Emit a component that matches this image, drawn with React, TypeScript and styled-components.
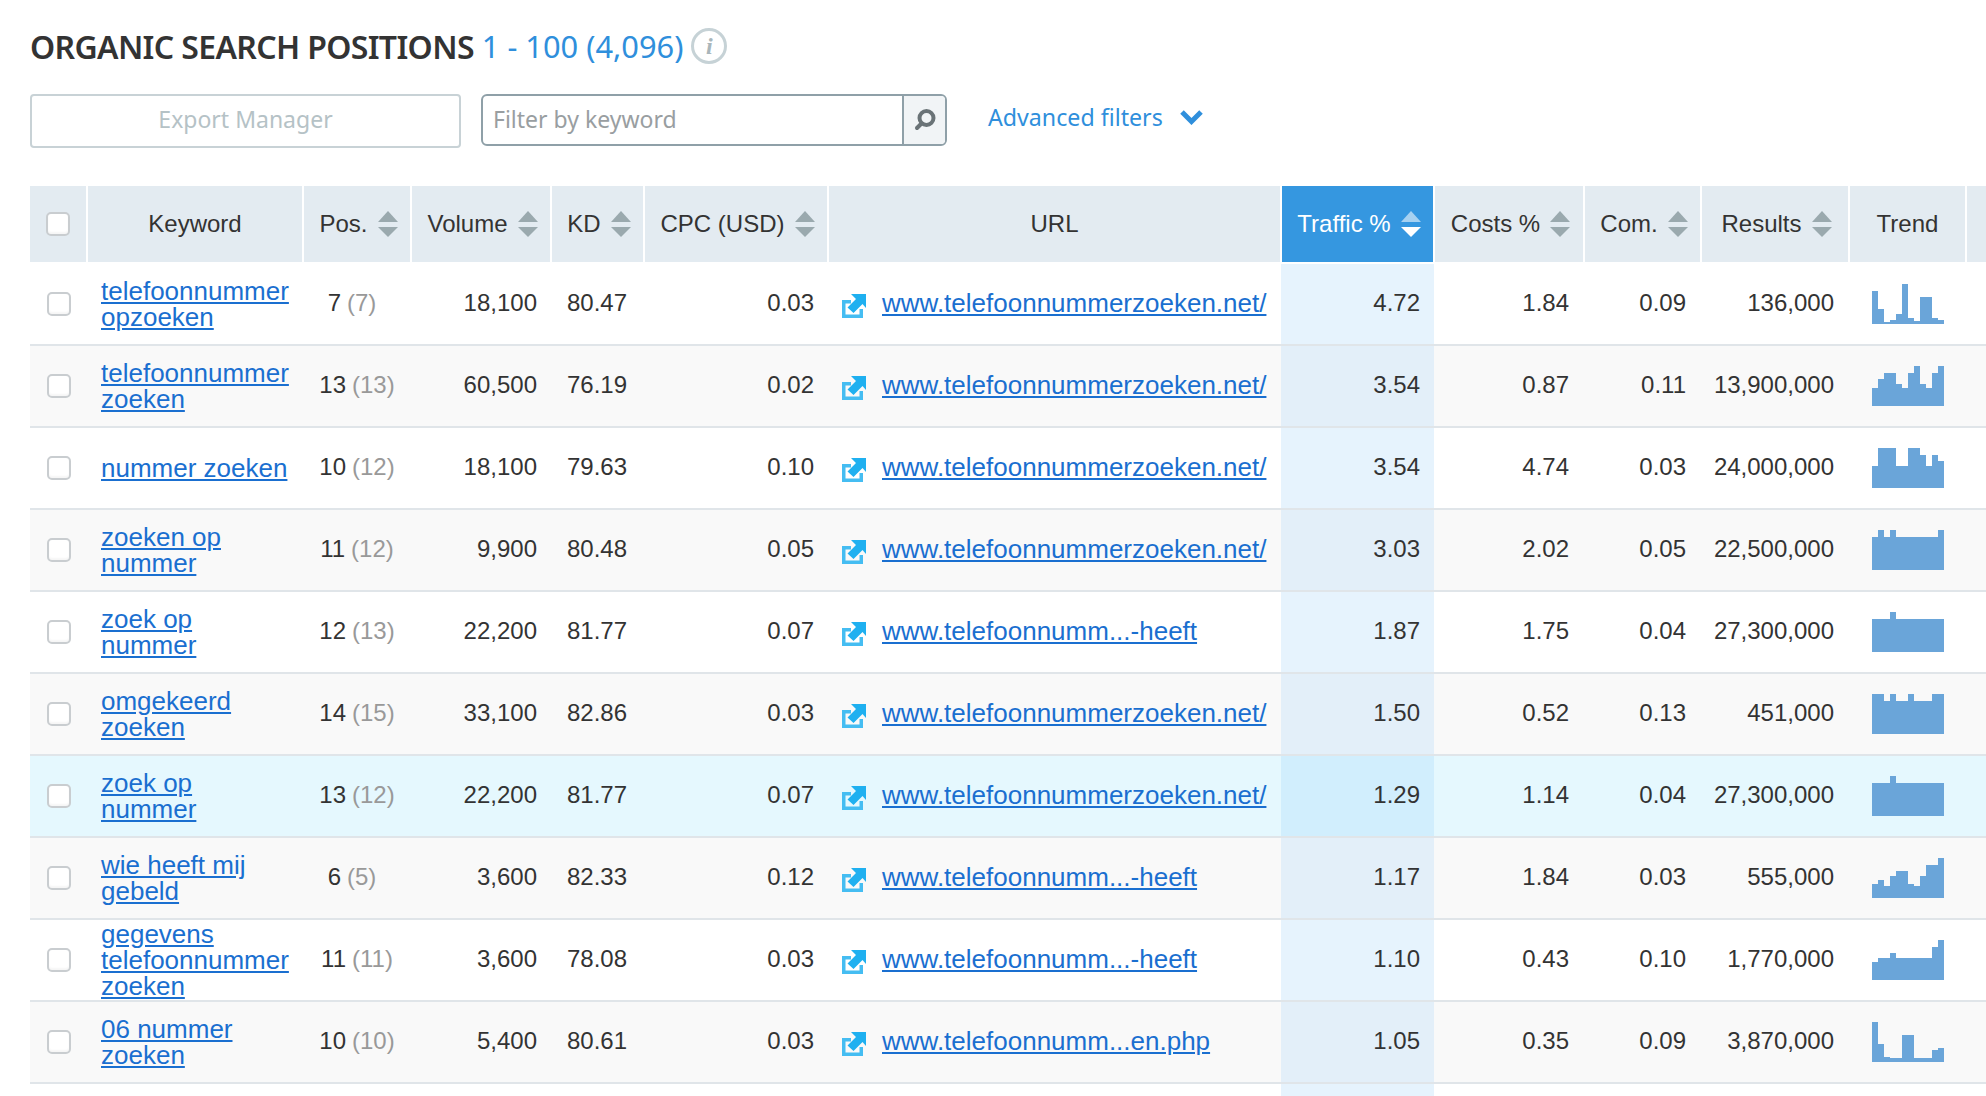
import React from 'react';
import styled, { createGlobalStyle } from 'styled-components';

const GlobalStyle = createGlobalStyle`
  html, body {
    margin: 0;
    height: 100%;
    overflow: hidden;
    background: #fff;
  }
  #root {
    height: 100%;
  }
`;

const COLUMNS = '56px 214px 106px 138px 91px 182px 451px 151px 148px 115px 146px 115px 1fr';

const Page = styled.div`
  height: 1096px;
  padding: 28px 0 0 30px;
  box-sizing: border-box;
  overflow: hidden;
  font-family: 'Liberation Sans', Arial, sans-serif;
  color: #333;
`;

const TitleRow = styled.div`
  display: flex;
  align-items: center;
  height: 36px;
`;

const Title = styled.h1`
  margin: 0;
  font-family: 'Noto Sans', sans-serif;
  font-size: 32px;
  font-weight: 600;
  color: #333;
  letter-spacing: -0.65px;
  white-space: nowrap;
`;

const Range = styled.span`
  margin-left: 8px;
  font-family: 'Noto Sans', sans-serif;
  font-size: 30.8px;
  color: #2f8fdc;
  white-space: nowrap;
`;

const InfoBadge = styled.span`
  width: 36px;
  height: 36px;
  margin-left: 8px;
  box-sizing: border-box;
  display: flex;
  align-items: center;
  justify-content: center;
  border: 3px solid #c6d2d6;
  border-radius: 50%;
  font-family: 'Liberation Serif', serif;
  font-style: italic;
  font-weight: 700;
  font-size: 24px;
  color: #a9b6bb;
`;

const Toolbar = styled.div`
  display: flex;
  align-items: flex-start;
  margin-top: 30px;
`;

const ExportButton = styled.button`
  width: 431px;
  height: 54px;
  padding: 0 0 4px;
  background: #fff;
  border: 2px solid #c8d2d6;
  border-radius: 4px;
  font-family: 'Noto Sans', sans-serif;
  font-size: 23px;
  color: #b5c2c6;
`;

const FilterBox = styled.div`
  width: 466px;
  height: 52px;
  margin-left: 20px;
  box-sizing: border-box;
  display: flex;
  border: 2px solid #8fa0a8;
  border-radius: 6px;
  overflow: hidden;
`;

const FilterText = styled.div`
  flex: 1;
  padding: 0 0 2px 10px;
  display: flex;
  align-items: center;
  font-family: 'Noto Sans', sans-serif;
  font-size: 23px;
  color: #999ea1;
`;

const SearchButton = styled.div`
  width: 41px;
  display: flex;
  align-items: center;
  justify-content: center;
  background: #f1f4f6;
  border-left: 2px solid #8fa0a8;
`;

const AdvancedFilters = styled.div`
  height: 46px;
  margin-left: 41px;
  display: flex;
  align-items: center;
  gap: 17px;
  font-family: 'Noto Sans', sans-serif;
  font-size: 23.2px;
  color: #2f8fdc;
`;

const Table = styled.div`
  margin-top: 38px;
`;

const HeaderRow = styled.div`
  display: grid;
  grid-template-columns: ${COLUMNS};
  column-gap: 2px;
  height: 76px;
`;

const HeaderCell = styled.div<{ $active?: boolean; $sortable?: boolean }>`
  display: flex;
  align-items: center;
  justify-content: center;
  gap: 10px;
  padding-left: ${(p) => (p.$sortable ? 3 : 0)}px;
  background: ${(p) => (p.$active ? '#3597e0' : '#e3ebf1')};
  color: ${(p) => (p.$active ? '#fff' : '#333')};
  font-size: 24px;
  white-space: nowrap;
  overflow: hidden;
`;

const Rows = styled.div`
  margin-top: 2px;
`;

type Tone = 'white' | 'grey' | 'hover';

const rowBg: Record<Tone, string> = { white: '#fff', grey: '#f9f9f9', hover: '#e5f8fe' };
const trafficBg: Record<Tone, string> = { white: '#e6f3fd', grey: '#e3eff9', hover: '#d1eefd' };

const Row = styled.div<{ $tone: Tone }>`
  display: grid;
  grid-template-columns: ${COLUMNS};
  column-gap: 2px;
  height: 82px;
  box-sizing: border-box;
  border-bottom: 2px solid #e0e5e9;
  background: ${(p) => rowBg[p.$tone]};
  font-size: 24px;
`;

const Cell = styled.div<{ $align?: 'left' | 'center' | 'right' }>`
  display: flex;
  align-items: center;
  justify-content: ${(p) =>
    p.$align === 'right' ? 'flex-end' : p.$align === 'center' ? 'center' : 'flex-start'};
  padding: 0 ${(p) => (p.$align === 'right' ? 14 : 0)}px 2px 0;
  white-space: nowrap;
`;

const CheckCell = styled(Cell)`
  padding: 0 0 0 2px;
`;

const KeywordCell = styled(Cell)`
  padding: 0 11px 0 13px;
  white-space: normal;
`;

const PosCell = styled(Cell)<{ $single: boolean }>`
  padding-right: ${(p) => (p.$single ? 10 : 0)}px;
`;

const VolumeCell = styled(Cell)`
  padding-right: 13px;
`;

const KdCell = styled(Cell)`
  padding-left: 15px;
`;

const UrlCell = styled(Cell)`
  padding-left: 13px;
  gap: 16px;
`;

const TrafficCell = styled(Cell)<{ $tone: Tone }>`
  margin: 0 -1px;
  padding-right: 14px;
  background: ${(p) => trafficBg[p.$tone]};
`;

const TrendCell = styled(Cell)`
  padding: 0;
`;

const Link = styled.a`
  font-size: 26px;
  line-height: 26px;
  color: #1a6fd0;
  text-decoration: underline;
`;

const Prev = styled.span`
  margin-left: 6px;
  color: #999;
`;

const CheckBox = styled.span`
  display: block;
  width: 24px;
  height: 24px;
  box-sizing: border-box;
  border: 2px solid #c9cdd0;
  border-radius: 5px;
  background: #fff;
  box-shadow: inset 0 -2px 2px rgba(0, 0, 0, 0.04);
`;

const ArrowStack = styled.svg`
  flex: none;
`;

const LinkIcon = styled.svg`
  flex: none;
  margin-top: 6px;
`;

function SortArrows({ active }: { active?: boolean }) {
  return (
    <ArrowStack width="20" height="26" viewBox="0 0 20 26">
      <polygon points="10,0 20,11 0,11" fill={active ? '#a6d1f1' : '#9aa9ae'} />
      <polygon points="0,16 20,16 10,26" fill={active ? '#fff' : '#9aa9ae'} />
    </ArrowStack>
  );
}

function Magnifier() {
  return (
    <svg width="24" height="24" viewBox="0 0 24 24" fill="none">
      <circle cx="13.5" cy="10" r="7" stroke="#6a7377" strokeWidth="4" />
      <path d="M8.5 15.5 L4 20" stroke="#6a7377" strokeWidth="4" strokeLinecap="round" />
    </svg>
  );
}

function Chevron() {
  return (
    <svg width="23" height="15" viewBox="0 0 23 15" fill="none">
      <path d="M2 2 L11.5 11.5 L21 2" stroke="#2f8fdc" strokeWidth="5" />
    </svg>
  );
}

function ExternalIcon() {
  return (
    <LinkIcon width="24" height="24" viewBox="0 0 24 24">
      <path d="M0 6 H9 V9.5 H3.5 V20.5 H17.5 V15 H21 V24 H0 Z" fill="#45bdf2" />
      <path d="M9 0 H24 V14 L20.5 10 L11.5 19 L5.5 13.5 L14 5 Z" fill="#1fb0f0" />
    </LinkIcon>
  );
}

function Trend({ bars }: { bars: number[] }) {
  return (
    <svg width="72" height="40" viewBox="0 0 72 40">
      {bars.map((h, i) => (
        <rect key={i} x={i * 6} y={40 - h} width="6" height={h} fill="#6aa5d9" />
      ))}
    </svg>
  );
}

const URL_FULL = 'www.telefoonnummerzoeken.net/';
const URL_HEEFT = 'www.telefoonnumm...-heeft';
const URL_PHP = 'www.telefoonnumm...en.php';

const FLAT = [33, 33, 33, 40, 33, 33, 33, 33, 33, 33, 33, 33];

const data = [
  { kw: 'telefoonnummer opzoeken', pos: 7, prev: 7, vol: '18,100', kd: '80.47', cpc: '0.03', url: URL_FULL, tr: '4.72', cost: '1.84', com: '0.09', res: '136,000', tone: 'white', bars: [33, 15, 2, 4, 10, 40, 6, 3, 27, 27, 6, 4] },
  { kw: 'telefoonnummer zoeken', pos: 13, prev: 13, vol: '60,500', kd: '76.19', cpc: '0.02', url: URL_FULL, tr: '3.54', cost: '0.87', com: '0.11', res: '13,900,000', tone: 'grey', bars: [18, 27, 33, 33, 22, 18, 33, 40, 22, 18, 33, 40] },
  { kw: 'nummer zoeken', pos: 10, prev: 12, vol: '18,100', kd: '79.63', cpc: '0.10', url: URL_FULL, tr: '3.54', cost: '4.74', com: '0.03', res: '24,000,000', tone: 'white', bars: [22, 40, 40, 40, 22, 22, 40, 40, 33, 22, 33, 27] },
  { kw: 'zoeken op nummer', pos: 11, prev: 12, vol: '9,900', kd: '80.48', cpc: '0.05', url: URL_FULL, tr: '3.03', cost: '2.02', com: '0.05', res: '22,500,000', tone: 'grey', bars: [33, 40, 33, 40, 33, 33, 33, 33, 33, 33, 33, 40] },
  { kw: 'zoek op nummer', pos: 12, prev: 13, vol: '22,200', kd: '81.77', cpc: '0.07', url: URL_HEEFT, tr: '1.87', cost: '1.75', com: '0.04', res: '27,300,000', tone: 'white', bars: FLAT },
  { kw: 'omgekeerd zoeken', pos: 14, prev: 15, vol: '33,100', kd: '82.86', cpc: '0.03', url: URL_FULL, tr: '1.50', cost: '0.52', com: '0.13', res: '451,000', tone: 'grey', bars: [40, 40, 33, 40, 33, 33, 40, 33, 33, 33, 40, 40] },
  { kw: 'zoek op nummer', pos: 13, prev: 12, vol: '22,200', kd: '81.77', cpc: '0.07', url: URL_FULL, tr: '1.29', cost: '1.14', com: '0.04', res: '27,300,000', tone: 'hover', bars: FLAT },
  { kw: 'wie heeft mij gebeld', pos: 6, prev: 5, vol: '3,600', kd: '82.33', cpc: '0.12', url: URL_HEEFT, tr: '1.17', cost: '1.84', com: '0.03', res: '555,000', tone: 'grey', bars: [14, 18, 12, 22, 27, 27, 14, 12, 22, 33, 33, 40] },
  { kw: 'gegevens telefoonnummer zoeken', pos: 11, prev: 11, vol: '3,600', kd: '78.08', cpc: '0.03', url: URL_HEEFT, tr: '1.10', cost: '0.43', com: '0.10', res: '1,770,000', tone: 'white', bars: [18, 22, 22, 27, 22, 22, 22, 22, 22, 22, 33, 40] },
  { kw: '06 nummer zoeken', pos: 10, prev: 10, vol: '5,400', kd: '80.61', cpc: '0.03', url: URL_PHP, tr: '1.05', cost: '0.35', com: '0.09', res: '3,870,000', tone: 'grey', bars: [40, 18, 5, 4, 4, 27, 27, 4, 4, 4, 12, 14] },
] as const;

export default function App() {
  return (
    <Page>
      <GlobalStyle />
      <TitleRow>
        <Title>ORGANIC SEARCH POSITIONS</Title>
        <Range>1 - 100 (4,096)</Range>
        <InfoBadge>i</InfoBadge>
      </TitleRow>
      <Toolbar>
        <ExportButton type="button">Export Manager</ExportButton>
        <FilterBox>
          <FilterText>Filter by keyword</FilterText>
          <SearchButton>
            <Magnifier />
          </SearchButton>
        </FilterBox>
        <AdvancedFilters>
          Advanced filters
          <Chevron />
        </AdvancedFilters>
      </Toolbar>
      <Table>
        <HeaderRow>
          <HeaderCell>
            <CheckBox />
          </HeaderCell>
          <HeaderCell>Keyword</HeaderCell>
          <HeaderCell $sortable>
            Pos.
            <SortArrows />
          </HeaderCell>
          <HeaderCell $sortable>
            Volume
            <SortArrows />
          </HeaderCell>
          <HeaderCell $sortable>
            KD
            <SortArrows />
          </HeaderCell>
          <HeaderCell $sortable>
            CPC (USD)
            <SortArrows />
          </HeaderCell>
          <HeaderCell>URL</HeaderCell>
          <HeaderCell $sortable $active>
            Traffic %
            <SortArrows active />
          </HeaderCell>
          <HeaderCell $sortable>
            Costs %
            <SortArrows />
          </HeaderCell>
          <HeaderCell $sortable>
            Com.
            <SortArrows />
          </HeaderCell>
          <HeaderCell $sortable>
            Results
            <SortArrows />
          </HeaderCell>
          <HeaderCell>Trend</HeaderCell>
          <HeaderCell />
        </HeaderRow>
        <Rows>
          {data.map((d, i) => (
            <Row key={i} $tone={d.tone}>
              <CheckCell $align="center">
                <CheckBox />
              </CheckCell>
              <KeywordCell>
                <Link href="#">{d.kw}</Link>
              </KeywordCell>
              <PosCell $align="center" $single={d.pos < 10}>
                {d.pos}
                <Prev>({d.prev})</Prev>
              </PosCell>
              <VolumeCell $align="right">{d.vol}</VolumeCell>
              <KdCell>{d.kd}</KdCell>
              <VolumeCell $align="right">{d.cpc}</VolumeCell>
              <UrlCell>
                <ExternalIcon />
                <Link href="#">{d.url}</Link>
              </UrlCell>
              <TrafficCell $align="right" $tone={d.tone}>
                {d.tr}
              </TrafficCell>
              <Cell $align="right">{d.cost}</Cell>
              <Cell $align="right">{d.com}</Cell>
              <Cell $align="right">{d.res}</Cell>
              <TrendCell $align="center">
                <Trend bars={[...d.bars]} />
              </TrendCell>
              <Cell />
            </Row>
          ))}
          <Row $tone="white">
            <Cell />
            <Cell />
            <Cell />
            <Cell />
            <Cell />
            <Cell />
            <Cell />
            <TrafficCell $tone="white" />
          </Row>
        </Rows>
      </Table>
    </Page>
  );
}
